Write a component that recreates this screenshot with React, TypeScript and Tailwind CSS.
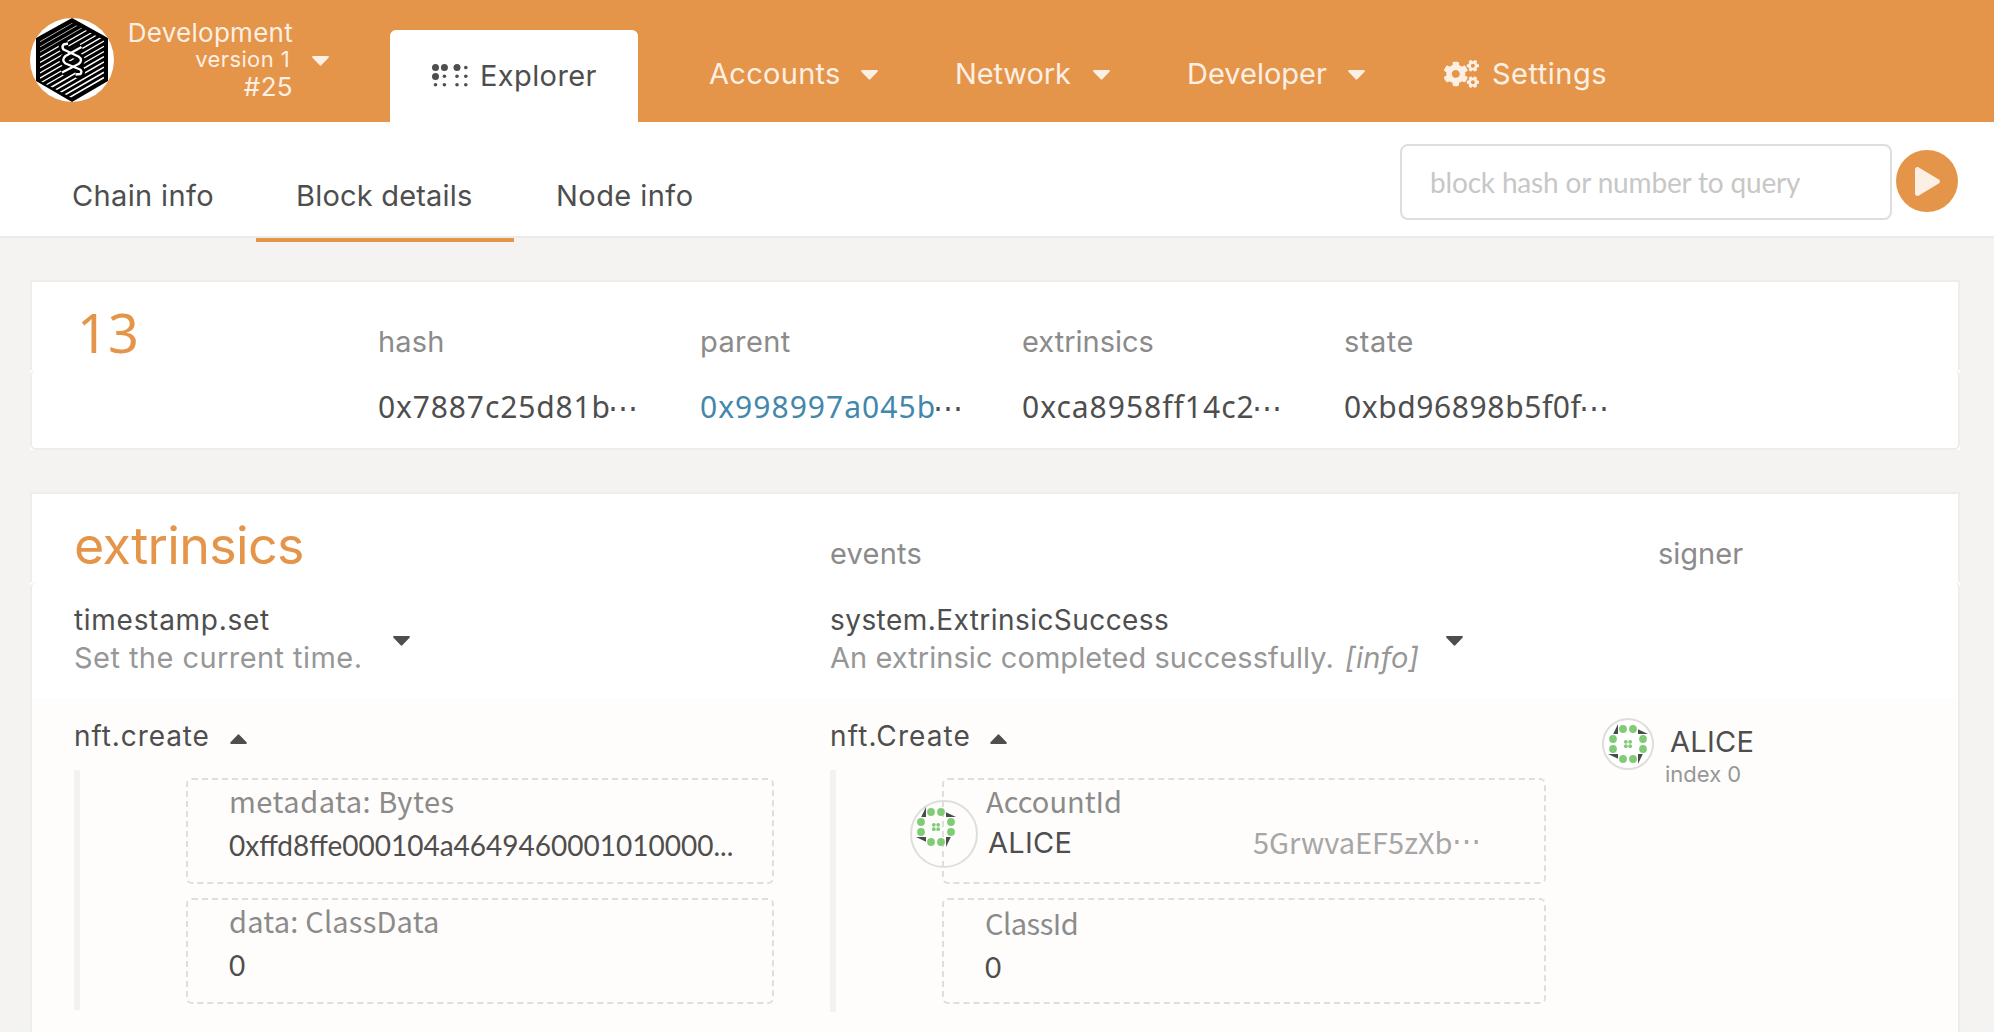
import React from "react";
import { FaCogs } from "react-icons/fa";

const INTER = "font-['Inter',sans-serif]";
const NOTO = "font-['Noto_Sans',sans-serif]";
const CJK = "font-['Noto_Sans_CJK_JP',sans-serif]";
const LATO = "font-['Lato',sans-serif]";

function Caret({ up = false, className = "" }: { up?: boolean; className?: string }) {
  return (
    <svg viewBox="0 0 17 10" className={`h-[10px] w-[17px] shrink-0 ${up ? "rotate-180" : ""} ${className}`}>
      <path d="M1.2 0h14.6c1 0 1.4 1 .7 1.7L9.3 9.3a1.1 1.1 0 0 1-1.6 0L.5 1.7C-.2 1 .2 0 1.2 0Z" fill="currentColor" />
    </svg>
  );
}

const STRAND_A = "M38 25.500 L33.500 26.500 Q31.500 28.500 33.500 31.500 L48.500 38.500 Q53.500 42 48.500 46 L32 54.500";
const STRAND_B = "M51.500 29 L35.500 38 Q31 42 35.500 45.500 L50 51.500 Q52.500 53 50.500 56 L45.500 56.500";

function ChainLogo() {
  const stripes = Array.from({ length: 19 }, (_, i) => i);
  return (
    <svg viewBox="0 0 84 84" className="mt-[18px] h-[84px] w-[84px] shrink-0 rounded-full bg-white">
      <defs>
        <clipPath id="hexInner">
          <path d="M42 5 74 22V63L42 80 10 63V22Z" />
        </clipPath>
      </defs>
      <path d="M42 0 78 20V63L42 84 6 63V20Z" fill="#000" />
      <g clipPath="url(#hexInner)" stroke="#fff">
        {stripes.map((i) => (
          <line key={i} x1="10" x2="74" y1={18.5 + i * 5.2} y2={-18.5 + i * 5.2} strokeWidth={i < 4 ? 0.7 : i > 10 ? 1.6 : 1.3} />
        ))}
      </g>
      <g fill="none" strokeLinejoin="round">
        <path d={STRAND_A} stroke="#000" strokeWidth="7.5" />
        <path d={STRAND_B} stroke="#000" strokeWidth="7.5" />
        <path d={STRAND_A} stroke="#fff" strokeWidth="2.4" />
        <path d={STRAND_B} stroke="#fff" strokeWidth="2.4" />
      </g>
    </svg>
  );
}

function BrailleIcon() {
  const big = [[3.5, 3.6], [12.4, 3.6], [25, 3.6], [3.5, 12.4]];
  const small = [[33.8, 3.6], [12.4, 12.2], [25, 12.2], [33.8, 12.2], [3.5, 20.8], [12.4, 20.8], [25, 20.8], [33.8, 20.8]];
  return (
    <svg viewBox="0 0 36 23" className="h-[23px] w-[36px] shrink-0 fill-current">
      {big.map(([x, y]) => <circle key={`${x}-${y}`} cx={x} cy={y} r="3.5" />)}
      {small.map(([x, y]) => <circle key={`${x}-${y}`} cx={x} cy={y} r="1.8" />)}
    </svg>
  );
}

function Identicon({ className = "" }: { className?: string }) {
  const dots = [[-5, -15], [5, -15], [-5, 15], [5, 15], [-15, -5], [-15, 5], [15, -5], [15, 5]];
  const core = [[-2.2, -2.2], [2.2, -2.2], [-2.2, 2.2], [2.2, 2.2]];
  return (
    <svg viewBox="-20 -20 40 40" className={`h-[40px] w-[40px] shrink-0 ${className}`}>
      <g fill="#4a4a4a">
        <path d="M-14.8-10H-10V-20Z" />
        <path d="M10-14.8V-10H20Z" />
        <path d="M14.8 10H10V20Z" />
        <path d="M-10 14.8V10H-20Z" />
      </g>
      <g fill="#7fcb76">
        {dots.map(([x, y]) => <circle key={`${x}/${y}`} cx={x} cy={y} r="3.9" />)}
        {core.map(([x, y]) => <circle key={`${x}/${y}`} cx={x} cy={y} r="1.9" />)}
      </g>
    </svg>
  );
}

function Header() {
  return (
    <header className="flex h-[122px] bg-[#e59549] pl-[30px] text-[#fcefe4]">
      <ChainLogo />
      <div className="w-[179px] pt-[19px] text-right leading-[27px]">
        <div className="text-[26px] tracking-[0.27px]">Development</div>
        <div className="pr-[3px] text-[22px] tracking-[0.39px]">version 1</div>
        <div className="text-[26px] tracking-[0.34px]">#25</div>
      </div>
      <Caret className="ml-[19px] mt-[56px]" />
      <div className="ml-[61px] mt-[30px] flex h-[92px] w-[248px] rounded-t-[6px] bg-white pl-[42px] text-[#4e4e4e]">
        <div className="mt-[34px] h-[23px]"><BrailleIcon /></div>
        <span className="ml-[12px] mt-[31px] text-[29px] leading-[30px] tracking-[0.39px]">Explorer</span>
      </div>
      <nav className="flex pt-[59px] text-[29px] leading-[30px]">
        <div className="ml-[71px] flex w-[246px]">
          <span className="w-[152px] tracking-[0.3px]">Accounts</span>
          <Caret className="mt-[11px]" />
        </div>
        <div className="flex w-[232px]">
          <span className="w-[138px] tracking-[-0.11px]">Network</span>
          <Caret className="mt-[11px]" />
        </div>
        <div className="flex w-[257px]">
          <span className="w-[161px]">Developer</span>
          <Caret className="mt-[11px]" />
        </div>
        <FaCogs className="mt-[-2px] h-[34px] w-[35px]" />
        <span className="ml-[13px] tracking-[0.5px]">Settings</span>
      </nav>
    </header>
  );
}

function SubNav() {
  return (
    <div className="flex h-[116px] border-b-2 border-[#ebebe9] bg-white text-[29px]">
      <div className="flex h-[120px] leading-[30px] text-[#4e4e4e]">
        <div className="w-[256px] pl-[72px] pt-[59px] tracking-[0.36px]">Chain info</div>
        <div className="w-[258px] border-b-4 border-[#e59549] pl-[40px] pt-[59px] tracking-[0.2px]">Block details</div>
        <div className="w-[258px] pl-[42px] pt-[59px] tracking-[0.45px]">Node info</div>
      </div>
      <div className={`ml-auto mt-[22px] flex h-[76px] w-[492px] items-center rounded-[8px] border-2 border-[#dededf] pl-[28px] text-[28px] tracking-[-0.17px] text-[#c7c7c7] ${LATO}`}>
        block hash or number to query
      </div>
      <div className="ml-[4px] mr-[36px] mt-[28px] flex h-[62px] w-[62px] items-center justify-center rounded-full bg-[#e59549]">
        <svg viewBox="0 0 25 29" className="h-[29px] w-[25px] fill-[#fcefe4]">
          <path d="M0 2.600C0 .600 2-.500 3.800.400L23.800 12.600C25.300 13.500 25.300 15.500 23.800 16.400L3.800 28.600C2 29.500 0 28.400 0 26.400Z" />
        </svg>
      </div>
    </div>
  );
}

function Hash({ text, link = false, className }: { text: string; link?: boolean; className: string }) {
  return (
    <div className={`-ml-px flex text-[30px] leading-[36px] text-[#4e4e4e] ${NOTO}`}>
      <span className={`${link ? "text-[#4387ab]" : ""} ${className}`}>{text}</span>
      <span className="-ml-[3px]">⋯</span>
    </div>
  );
}

function Summary() {
  return (
    <section className="ml-[30px] mr-[34px] mt-[42px] bg-white">
      <div className="grid h-[90px] grid-cols-[346px_322px_322px_322px_1fr] border-x-2 border-t-2 border-[#ededeb] text-[29px] leading-[30px] text-[#8b8b8b]">
        <div className={`pl-[45px] pt-[20px] text-[54px] leading-[60px] text-[#e59549] ${NOTO}`}>13</div>
        <div className="pt-[45px] tracking-[0.2px]">hash</div>
        <div className="pt-[45px] tracking-[0.4px]">parent</div>
        <div className="pt-[45px]">extrinsics</div>
        <div className="pt-[45px] tracking-[0.5px]">state</div>
      </div>
      <div className="grid h-[80px] grid-cols-[347px_322px_322px_322px_1fr] rounded-[6px] border-x-2 border-b-2 border-[#ededeb] pt-[19px]">
        <div />
        <Hash text="0x7887c25d81b" className="tracking-[0.87px]" />
        <Hash text="0x998997a045b" link className="tracking-[1.03px]" />
        <Hash text="0xca8958ff14c2" className="tracking-[0.99px]" />
        <Hash text="0xbd96898b5f0f" className="tracking-[0.6px]" />
      </div>
    </section>
  );
}

interface FieldProps {
  label: string;
  value: string;
  labelClass: string;
  valueClass: string;
  className?: string;
}

function Field({ label, value, labelClass, valueClass, className = "" }: FieldProps) {
  return (
    <div className={`h-[106px] rounded-[6px] border-2 border-dashed border-[#dededd] pl-[41px] ${className}`}>
      <div className={`text-[29px] leading-[34px] text-[#8b8b8b] ${CJK} ${labelClass}`}>{label}</div>
      <div className={`text-[28px] leading-[30px] text-[#4e4e4e] ${LATO} ${valueClass}`}>{value}</div>
    </div>
  );
}

function Extrinsics() {
  return (
    <section className="ml-[30px] mr-[34px] mt-[42px] bg-white text-[#4e4e4e]">
      <div className="grid h-[90px] grid-cols-[798px_828px_1fr] border-x-2 border-t-2 border-[#ededeb] text-[29px] leading-[30px] text-[#8b8b8b]">
        <div className="pl-[42px] pt-[22px] text-[52px] leading-[60px] tracking-[-0.67px] text-[#e59549]">extrinsics</div>
        <div className="pt-[45px] tracking-[0.25px]">events</div>
        <div className="pt-[45px]">signer</div>
      </div>
      <div className="grid h-[116px] grid-cols-[756px_1fr] rounded-t-[6px] border-x-2 border-[#ededeb] pl-[42px] pt-[19px] leading-[38px]">
        <div className="flex">
          <div className="w-[319px]">
            <div className="text-[28px] tracking-[0.71px]">timestamp.set</div>
            <div className="text-[29px] tracking-[0.44px] text-[#979797]">Set the current time.</div>
          </div>
          <Caret className="mt-[35px]" />
        </div>
        <div className="flex">
          <div className="w-[616px]">
            <div className="text-[28px] tracking-[0.44px]">system.ExtrinsicSuccess</div>
            <div className="text-[29px] tracking-[0.06px] text-[#979797]">
              An extrinsic completed successfully. <i className="ml-[3px] tracking-[0.3px]">[info]</i>
            </div>
          </div>
          <Caret className="mt-[35px]" />
        </div>
      </div>
      <div className="grid h-[360px] grid-cols-[756px_770px_1fr] border-x-2 border-[#ededeb] bg-[#fefdfb] pl-[42px]">
        <div className="pt-[19px]">
          <div className="flex text-[28px] leading-[38px] tracking-[0.9px]">
            <span className="w-[156px]">nft.create</span>
            <Caret up className="mt-[17px]" />
          </div>
          <div className="mt-[15px] h-[240px] w-[700px] border-l-[6px] border-[#f2f2f2] pl-[106px] pt-[8px]">
            <Field
              label="metadata: Bytes"
              value="0xffd8ffe000104a4649460001010000..."
              labelClass="pt-[3px] tracking-[0.5px]"
              valueClass="mt-[13px]"
            />
            <Field
              label="data: ClassData"
              value="0"
              labelClass="pt-[3px] tracking-[0.2px]"
              valueClass="mt-[13px]"
              className="mt-[14px]"
            />
          </div>
        </div>
        <div className="pt-[19px]">
          <div className="flex text-[28px] leading-[38px] tracking-[1.1px]">
            <span className="w-[160px]">nft.Create</span>
            <Caret up className="mt-[17px]" />
          </div>
          <div className="mt-[15px] h-[242px] w-[716px] border-l-[6px] border-[#f2f2f2] pl-[106px] pt-[8px]">
            <div className="relative h-[106px] rounded-[6px] border-2 border-dashed border-[#dededd] pl-[42px]">
              <div className={`pt-[3px] text-[29px] leading-[34px] text-[#8b8b8b] ${CJK}`}>AccountId</div>
              <div className="mt-[9px] flex text-[29px] leading-[30px]">
                <span className="w-[267px] pl-[2px] pt-[2px] tracking-[0.31px]">ALICE</span>
                <span className={`flex text-[#a6a6a6] ${CJK}`}>
                  5GrwvaEF5zXb<span className={`-ml-px ${INTER}`}>⋯</span>
                </span>
              </div>
              <div className="absolute left-[-34px] top-[20px] h-[68px] w-[68px] rounded-full border-2 border-[#dededd]">
                <Identicon className="ml-[4px] mt-[5px]" />
              </div>
            </div>
            <Field
              label="ClassId"
              value="0"
              labelClass="pt-[5px] tracking-[-0.5px]"
              valueClass="mt-[13px]"
              className="mt-[14px]"
            />
          </div>
        </div>
        <div className="flex pt-[20px]">
          <div className="ml-[2px] flex h-[52px] w-[52px] items-center justify-center rounded-full border-2 border-[#dededd] bg-white">
            <Identicon />
          </div>
          <div className="ml-[11px] pt-[9px]">
            <div className="pl-[5px] text-[29px] leading-[30px] tracking-[0.31px]">ALICE</div>
            <div className="mt-[4px] text-[22px] leading-[26px] text-[#979797]">index 0</div>
          </div>
        </div>
      </div>
    </section>
  );
}

export default function App() {
  return (
    <div className={`h-[1032px] w-[1994px] overflow-hidden bg-[#f4f3f1] ${INTER}`}>
      <Header />
      <SubNav />
      <Summary />
      <Extrinsics />
    </div>
  );
}
